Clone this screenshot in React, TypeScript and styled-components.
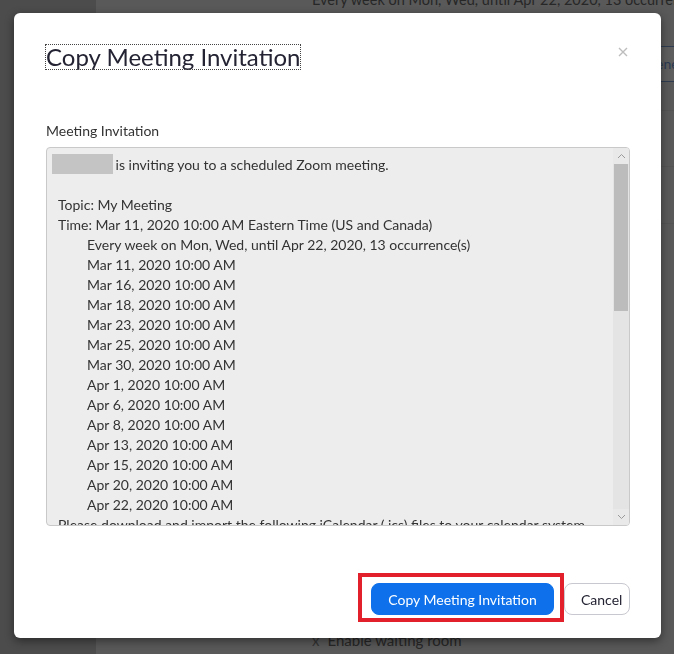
import styled, { createGlobalStyle } from "styled-components";

const GlobalStyle = createGlobalStyle`
    html, body {
        margin: 0;
        padding: 0;
        height: 100%;
        overflow: hidden;
    }
    body {
        font-family: Lato, "Open Sans", "Liberation Sans", sans-serif;
        background: #585858;
    }
`;

const occurrences = [
    "Mar 11, 2020 10:00 AM",
    "Mar 16, 2020 10:00 AM",
    "Mar 18, 2020 10:00 AM",
    "Mar 23, 2020 10:00 AM",
    "Mar 25, 2020 10:00 AM",
    "Mar 30, 2020 10:00 AM",
    "Apr 1, 2020 10:00 AM",
    "Apr 6, 2020 10:00 AM",
    "Apr 8, 2020 10:00 AM",
    "Apr 13, 2020 10:00 AM",
    "Apr 15, 2020 10:00 AM",
    "Apr 20, 2020 10:00 AM",
    "Apr 22, 2020 10:00 AM",
];

// page behind the dimmed overlay
const Page = styled.div`
    display: grid;
    grid-template-columns: 96px 1fr;
    height: 654px;
    overflow: hidden;
`;

const Sidebar = styled.div`
    background: #4c4c4c;
`;

const Main = styled.div`
    display: flex;
    flex-direction: column;
    background: #595959;
    overflow: hidden;
    color: #272727;
    font-size: 14px;
`;

const BehindText = styled.div<{ top?: boolean }>`
    padding-left: 216px;
    line-height: 20px;
    white-space: nowrap;
    font-size: ${(p) => (p.top ? "14.5px" : "15px")};
    margin-top: ${(p) => (p.top ? "-10px" : "auto")};
    margin-bottom: ${(p) => (p.top ? "0" : "4px")};
`;

const Cross = styled.span`
    margin-right: 8px;
    color: #333;
`;

const StubRow = styled.div`
    display: flex;
    justify-content: flex-end;
    margin-top: 36px;
    height: 34px;
    border-bottom: 1px solid #2f3b50;
    border-top: 1px solid #2f3b50;
    margin-left: 560px;
`;

const StubButton = styled.div`
    width: 100%;
    background: #5e5e5e;
    color: #2c3a52;
    line-height: 34px;
    padding-left: 0;
    white-space: nowrap;
`;

const Divider = styled.div<{ gap: number }>`
    margin-top: ${(p) => p.gap}px;
    margin-left: 560px;
    border-top: 1px solid #545454;
`;

// modal
const Overlay = styled.div`
    position: fixed;
    inset: 0;
    padding: 13px 13px 16px 14px;
    display: flex;
`;

const Modal = styled.div`
    flex: 1;
    background: #fff;
    border-radius: 6px;
    box-shadow: 0 3px 10px rgba(0, 0, 0, 0.45);
    padding: 32px 31px 16px 32px;
    display: flex;
    flex-direction: column;
    color: #333;
`;

const Header = styled.div`
    display: flex;
    justify-content: space-between;
    align-items: flex-start;
`;

const Title = styled.h2`
    margin: 0;
    font-size: 24px;
    font-weight: 400;
    line-height: 23px;
    color: #232333;
    outline: 1px dotted #444;
    padding-bottom: 1px;
`;

const CloseButton = styled.button`
    border: none;
    background: none;
    padding: 0;
    margin: 2px 2px 0 0;
    width: 10px;
    height: 10px;
    display: flex;
    cursor: pointer;
`;

const Label = styled.div`
    margin-top: 52px;
    font-size: 14px;
    line-height: 20px;
    color: #333;
`;

const TextBox = styled.div`
    margin-top: 6px;
    height: 379px;
    box-sizing: border-box;
    border: 1px solid #c9c9c9;
    border-radius: 4px;
    background: #ededed;
    display: flex;
    overflow: hidden;
`;

const TextContent = styled.div`
    flex: 1;
    overflow: hidden;
    padding: 7px 0 0 11px;
    font-size: 14px;
    line-height: 20px;
    color: #333;
    white-space: pre;
`;

const Line = styled.div<{ indent?: boolean }>`
    height: 20px;
    padding-left: ${(p) => (p.indent ? "29px" : "0")};
`;

const Redacted = styled.span`
    display: inline-block;
    vertical-align: top;
    width: 61px;
    height: 20px;
    margin-top: -1px;
    margin-left: -6px;
    margin-right: -1px;
    background: #c4c4c4;
`;

const Scrollbar = styled.div`
    width: 16px;
    display: flex;
    flex-direction: column;
    background: #e4e4e4;
`;

const ScrollArrow = styled.div`
    height: 16px;
    display: flex;
    align-items: center;
    justify-content: center;
    background: #e9e9e9;
`;

const Track = styled.div`
    flex: 1;
`;

const Thumb = styled.div`
    margin: 0 1px;
    height: 147px;
    background: #bcbcbc;
`;

const Footer = styled.div`
    margin-top: auto;
    display: flex;
    justify-content: flex-end;
    align-items: flex-start;
`;

const Highlight = styled.div`
    border: 4px solid #e2202c;
    padding: 6px 6px 3px 9px;
    display: flex;
`;

const Button = styled.button<{ primary?: boolean }>`
    height: 32px;
    box-sizing: border-box;
    border-radius: 8px;
    font-family: inherit;
    font-size: 14px;
    cursor: pointer;
    padding: 0 16px;
    border: 1px solid ${(p) => (p.primary ? "#0e71eb" : "#c8c8d0")};
    background: ${(p) => (p.primary ? "#0e71eb" : "#fff")};
    color: ${(p) => (p.primary ? "#fff" : "#232333")};
    width: ${(p) => (p.primary ? "183px" : "66px")};
    margin-top: ${(p) => (p.primary ? "0" : "10px")};
`;

function Chevron({ up }: { up?: boolean }) {
    return (
        <svg width="9" height="6" viewBox="0 0 9 6">
            <path
                d={up ? "M1 5 L4.5 1.5 L8 5" : "M1 1 L4.5 4.5 L8 1"}
                fill="none"
                stroke="#9a9a9a"
                strokeWidth="1"
            />
        </svg>
    );
}

export default function App() {
    return (
        <>
            <GlobalStyle />
            <Page>
                <Sidebar />
                <Main>
                    <BehindText top>
                        Every week on Mon, Wed, until Apr 22, 2020, 13 occurrence(s)
                    </BehindText>
                    <StubRow>
                        <StubButton>ene</StubButton>
                    </StubRow>
                    <Divider gap={28} />
                    <Divider gap={55} />
                    <Divider gap={56} />
                    <BehindText>
                        <Cross>x</Cross>Enable waiting room
                    </BehindText>
                </Main>
            </Page>
            <Overlay>
                <Modal>
                    <Header>
                        <Title>Copy Meeting Invitation</Title>
                        <CloseButton aria-label="Close">
                            <svg width="10" height="10" viewBox="0 0 10 10">
                                <path d="M1 1 L9 9 M9 1 L1 9" stroke="#bdbdbd" strokeWidth="1.4" />
                            </svg>
                        </CloseButton>
                    </Header>
                    <Label>Meeting Invitation</Label>
                    <TextBox>
                        <TextContent>
                            <Line>
                                <Redacted /> is inviting you to a scheduled Zoom meeting.
                            </Line>
                            <Line />
                            <Line>Topic: My Meeting</Line>
                            <Line>Time: Mar 11, 2020 10:00 AM Eastern Time (US and Canada)</Line>
                            <Line indent>Every week on Mon, Wed, until Apr 22, 2020, 13 occurrence(s)</Line>
                            {occurrences.map((o) => (
                                <Line indent key={o}>
                                    {o}
                                </Line>
                            ))}
                            <Line>
                                Please download and import the following iCalendar (.ics) files to your calendar system.
                            </Line>
                            <Line>Weekly: https://zoom.us/meeting/tJ0qc-qgrTkpHtL0/ics</Line>
                        </TextContent>
                        <Scrollbar>
                            <ScrollArrow>
                                <Chevron up />
                            </ScrollArrow>
                            <Track>
                                <Thumb />
                            </Track>
                            <ScrollArrow>
                                <Chevron />
                            </ScrollArrow>
                        </Scrollbar>
                    </TextBox>
                    <Footer>
                        <Highlight>
                            <Button primary>Copy Meeting Invitation</Button>
                        </Highlight>
                        <Button>Cancel</Button>
                    </Footer>
                </Modal>
            </Overlay>
        </>
    );
}
